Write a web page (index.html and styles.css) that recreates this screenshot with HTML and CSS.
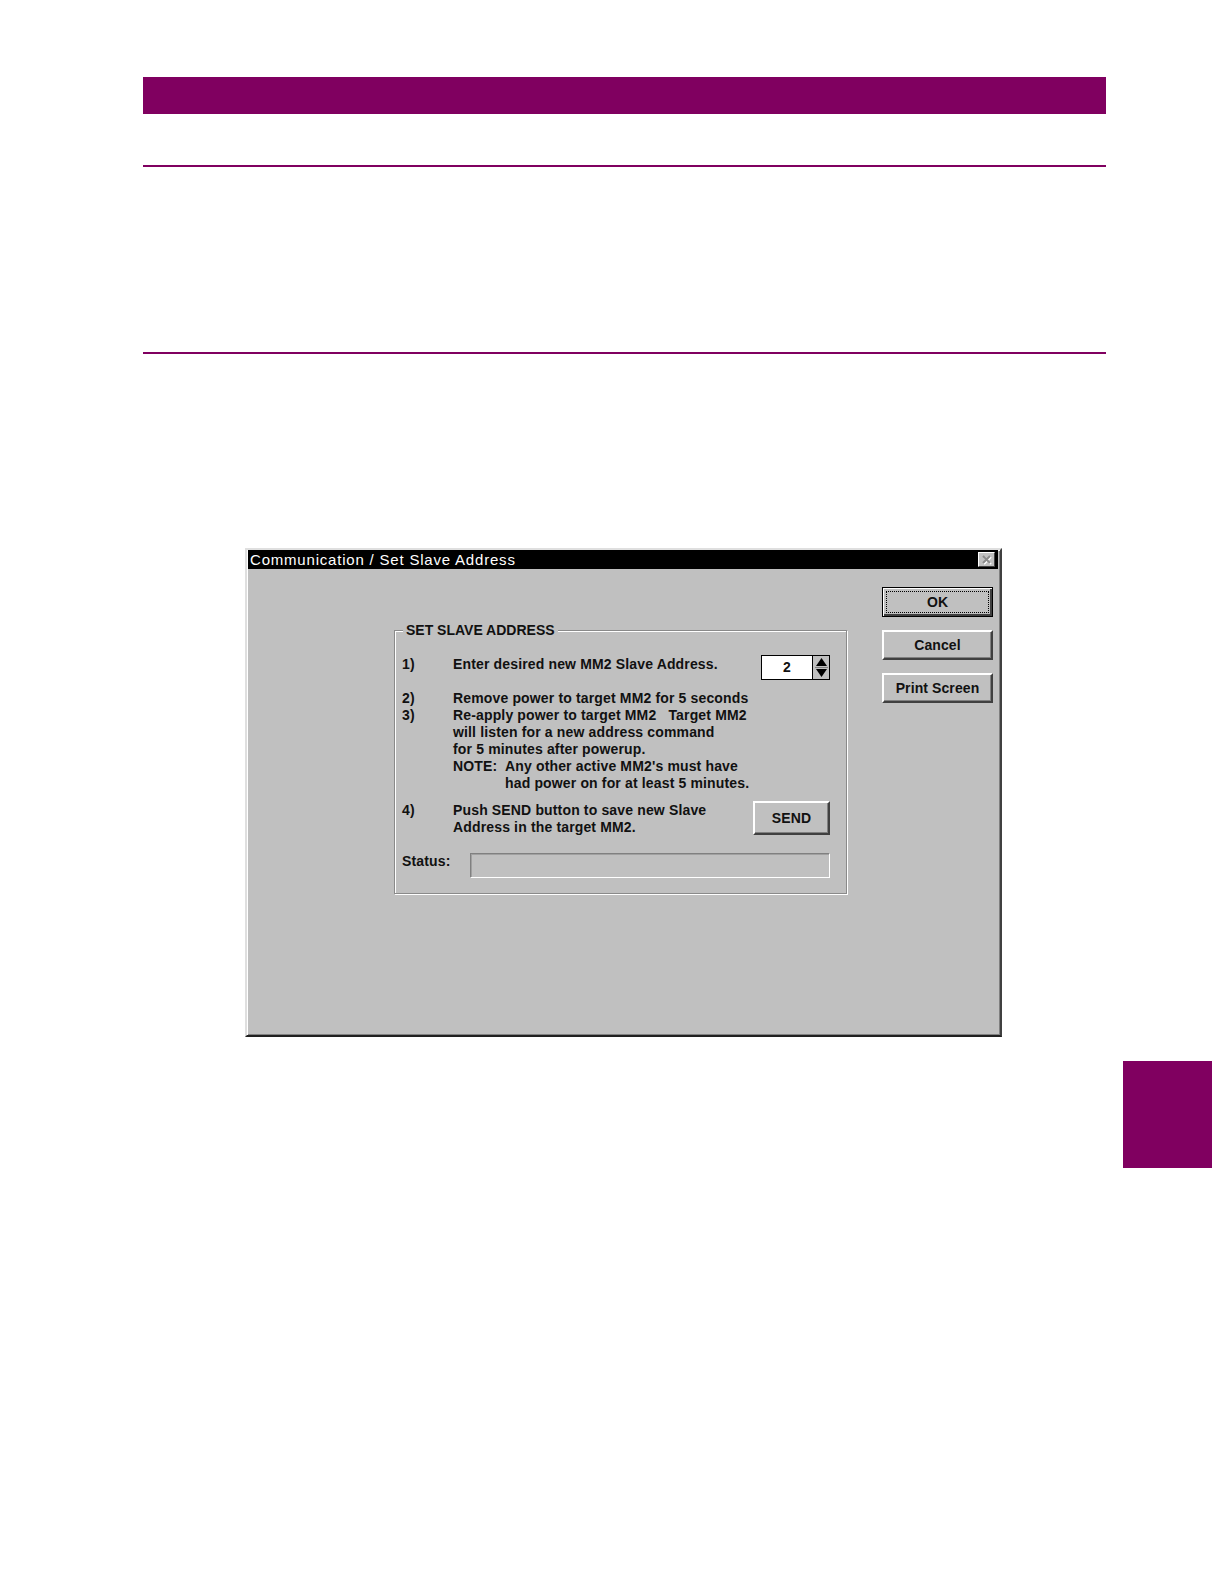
FILE: index.html
```html
<!DOCTYPE html>
<html>
<head>
<meta charset="utf-8">
<link rel="stylesheet" href="styles.css">
</head>
<body>
<div class="page">
  <div class="topbar"></div>
  <div class="rule rule1"></div>
  <div class="rule rule2"></div>

  <div class="dialog">
    <div class="titlebar">
      <span class="title">Communication / Set Slave Address</span>
      <span class="closebox">
        <svg width="15" height="13" viewBox="0 0 15 13"><path d="M4 3 L11 10 M11 3 L4 10" stroke="#ffffff" stroke-width="2" transform="translate(1,1)"/><path d="M4 3 L11 10 M11 3 L4 10" stroke="#8a8a8a" stroke-width="2"/></svg>
      </span>
    </div>
    <div class="body">
      <div class="group">
        <span class="legend">SET SLAVE ADDRESS</span>
        <div class="row row1">
          <span class="num">1)</span>
          <span class="txt">Enter desired new MM2 Slave Address.</span>
          <span class="spinner">
            <span class="spinval">2</span>
            <span class="spinarrows">
              <svg width="15" height="23" viewBox="0 0 15 23"><path d="M7.5 2 L13 10 L2 10 Z" fill="#000"/><path d="M1 11.5 L14 11.5" stroke="#808080" stroke-width="1"/><path d="M2 13 L13 13 L7.5 21 Z" fill="#000"/></svg>
            </span>
          </span>
        </div>
        <div class="row row2">
          <span class="num">2)</span>
          <span class="txt">Remove power to target MM2 for 5 seconds</span>
        </div>
        <div class="row">
          <span class="num">3)</span>
          <div class="txt">
            <div>Re-apply power to target MM2&nbsp;&nbsp; Target MM2</div>
            <div>will listen for a new address command</div>
            <div>for 5 minutes after powerup.</div>
            <div class="note"><span class="notelbl">NOTE:</span><span>Any other active MM2's must have<br>had power on for at least 5 minutes.</span></div>
          </div>
        </div>
        <div class="row row4">
          <span class="num">4)</span>
          <span class="txt">Push SEND button to save new Slave<br>Address in the target MM2.</span>
          <span class="btn send">SEND</span>
        </div>
        <div class="statusrow">
          <span class="statuslbl">Status:</span>
          <span class="statusfield"></span>
        </div>
      </div>
      <div class="buttons">
        <span class="btn default"><span class="focus">OK</span></span>
        <span class="btn">Cancel</span>
        <span class="btn">Print Screen</span>
      </div>
    </div>
  </div>

  <div class="tab"></div>
</div>
</body>
</html>
```
FILE: styles.css
```css
html, body {
  margin: 0;
  padding: 0;
  background: #ffffff;
}
.page {
  padding-top: 77px;
  font-family: "Liberation Sans", Arial, sans-serif;
}
.topbar {
  margin-left: 143px;
  width: 963px;
  height: 37px;
  background: #800060;
}
.rule {
  margin-left: 143px;
  width: 963px;
  height: 2px;
  background: #800060;
}
.rule1 { margin-top: 51px; }
.rule2 { margin-top: 185px; }

.dialog {
  margin-top: 194px;
  margin-left: 245px;
  width: 757px;
  height: 489px;
  box-sizing: border-box;
  background: #c0c0c0;
  border-top: 2px solid #dfdfdf;
  border-left: 2px solid #dfdfdf;
  border-right: 2px solid #404040;
  border-bottom: 2px solid #202020;
  box-shadow: inset 1px 1px 0 #ffffff, inset -1px -1px 0 #808080;
  padding: 0 2px 0 1px;
}
.titlebar {
  height: 19px;
  background: #000000;
  display: flex;
  align-items: center;
  justify-content: space-between;
  padding: 0 3px 0 2px;
}
.title {
  color: #ffffff;
  font-size: 15px;
  letter-spacing: 0.8px;
  line-height: 19px;
}
.closebox {
  width: 17px;
  height: 15px;
  box-sizing: border-box;
  background: #c0c0c0;
  border-top: 1px solid #ffffff;
  border-left: 1px solid #ffffff;
  border-right: 1px solid #404040;
  border-bottom: 1px solid #404040;
  display: flex;
  align-items: center;
  justify-content: center;
}
.closebox svg { display: block; }

.body {
  display: flex;
  align-items: flex-start;
}
.group {
  position: relative;
  margin-top: 61px;
  margin-left: 146px;
  width: 453px;
  height: 264px;
  box-sizing: border-box;
  border: 1px solid #8a8a8a;
  box-shadow: inset 1px 1px 0 #ffffff, 1px 1px 0 #ffffff;
  padding: 25px 16px 0 7px;
  font-size: 14px;
  letter-spacing: 0.15px;
  font-weight: bold;
  color: #111111;
  line-height: 17px;
}
.legend {
  position: absolute;
  left: 8px;
  top: -9px;
  padding: 0 3px;
  background: #c0c0c0;
  font-size: 14px;
  letter-spacing: 0;
  line-height: 17px;
}
.row {
  display: flex;
  align-items: flex-start;
}
.num {
  width: 51px;
  flex: none;
}
.txt { flex: 1; white-space: nowrap; }
.row1 { height: 25px; }
.row2 { margin-top: 9px; }
.row4 { margin-top: 10px; height: 34px; }
.note { display: flex; }
.notelbl { width: 52px; flex: none; }

.spinner {
  display: flex;
  margin-top: -1px;
}
.spinval {
  width: 52px;
  height: 25px;
  box-sizing: border-box;
  background: #ffffff;
  border: 1px solid #000000;
  display: flex;
  align-items: center;
  justify-content: center;
  font-size: 14px;
}
.spinarrows {
  width: 17px;
  height: 25px;
  box-sizing: border-box;
  background: #c0c0c0;
  border: 1px solid #000000;
  border-left: none;
  display: flex;
  align-items: center;
  justify-content: center;
}
.spinarrows svg { display: block; }

.btn {
  display: flex;
  align-items: center;
  justify-content: center;
  box-sizing: border-box;
  width: 111px;
  height: 30px;
  background: #c0c0c0;
  border-top: 2px solid #ffffff;
  border-left: 2px solid #ffffff;
  border-right: 2px solid #404040;
  border-bottom: 2px solid #404040;
  box-shadow: inset -1px -1px 0 #808080;
  font-size: 14px;
  font-weight: bold;
  letter-spacing: 0.1px;
  color: #111111;
}
.send {
  width: 77px;
  height: 34px;
  margin-top: -1px;
  flex: none;
}
.statusrow {
  display: flex;
  align-items: flex-start;
  margin-top: 17px;
}
.statuslbl { width: 68px; flex: none; }
.statusfield {
  width: 360px;
  height: 25px;
  box-sizing: border-box;
  border-top: 1px solid #808080;
  border-left: 1px solid #808080;
  border-right: 1px solid #ffffff;
  border-bottom: 1px solid #ffffff;
  box-shadow: inset 1px 1px 0 #a0a0a0;
}

.buttons {
  margin-top: 18px;
  margin-left: 35px;
  display: flex;
  flex-direction: column;
  gap: 13px;
}
.btn.default {
  border: 1px solid #000000;
  box-shadow: inset 1px 1px 0 #ffffff, inset -2px -2px 0 #404040;
  padding: 3px;
}
.focus {
  width: 100%;
  height: 100%;
  box-sizing: border-box;
  border: 1px dotted #000000;
  display: flex;
  align-items: center;
  justify-content: center;
}

.tab {
  margin-top: 24px;
  margin-left: 1123px;
  width: 89px;
  height: 107px;
  background: #800060;
}
```
